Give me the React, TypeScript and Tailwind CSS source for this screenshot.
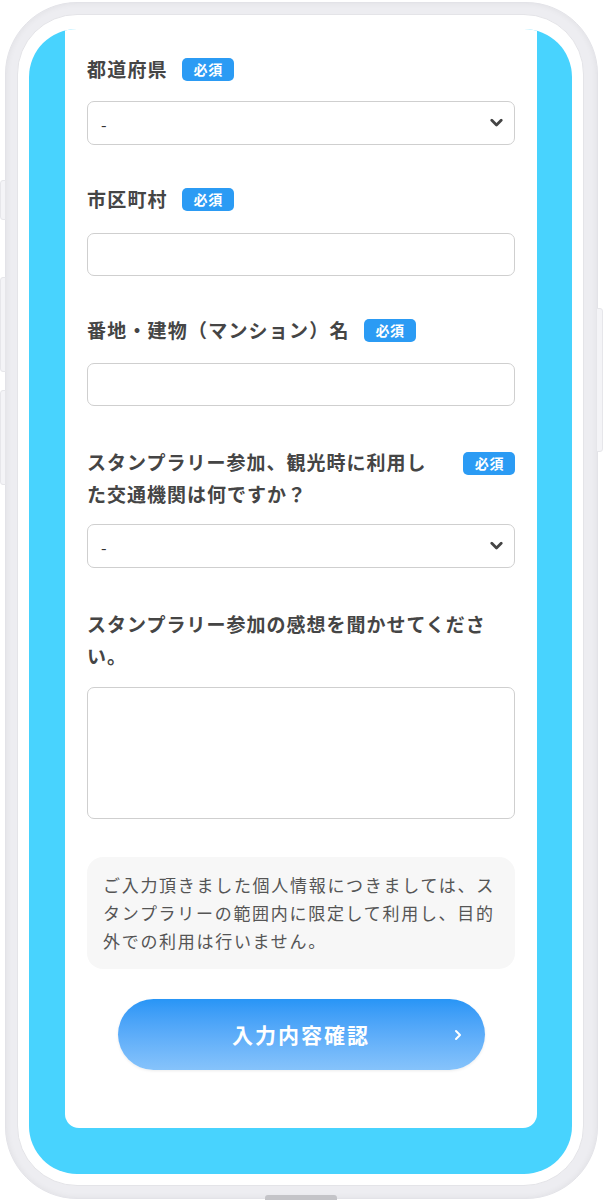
import React from "react";

const FONT = "font-['Noto_Sans_CJK_JP','Noto_Sans',sans-serif]";

function Badge() {
  return (
    <span className="inline-flex h-[23px] w-[52px] shrink-0 items-center justify-center rounded-[5px] bg-[#2b9bf4] pl-[1px] text-[14px] font-bold tracking-[0.05em] text-white">
      必須
    </span>
  );
}

function Chevron() {
  return (
    <svg
      className="pointer-events-none absolute right-[12px] top-1/2 -translate-y-1/2"
      width="13"
      height="9"
      viewBox="0 0 13 9"
      fill="none"
    >
      <polyline points="1.8,1.8 6.5,6.5 11.2,1.8" stroke="#444" strokeWidth="2.8" strokeLinecap="round" strokeLinejoin="round" />
    </svg>
  );
}

function SelectBox() {
  return (
    <div className="relative h-[44px]">
      <select
        className={`h-full w-full appearance-none rounded-[7px] border border-[#cfcfcf] bg-white pl-[13px] pt-[2px] text-[16px] text-[#333] outline-none ${FONT}`}
        defaultValue="-"
      >
        <option value="-">-</option>
      </select>
      <Chevron />
    </div>
  );
}

function Label({ text, badge = true }: { text: string; badge?: boolean }) {
  return (
    <div className="flex items-center gap-[14px]">
      <span className="text-[19px] font-bold leading-[32px] tracking-[1.2px] text-[#454545]">{text}</span>
      {badge && <Badge />}
    </div>
  );
}

export default function App() {
  return (
    <div className={`relative h-[1200px] w-[603px] overflow-hidden bg-white ${FONT}`}>
      {/* side buttons */}
      <div className="absolute left-0 top-[180px] h-[40px] w-[6px] rounded-l-[3px] border border-[#e6e6ea] bg-[#f4f4f7]" />
      <div className="absolute left-0 top-[277px] h-[95px] w-[6px] rounded-l-[3px] border border-[#e6e6ea] bg-[#f4f4f7]" />
      <div className="absolute left-0 top-[390px] h-[95px] w-[6px] rounded-l-[3px] border border-[#e6e6ea] bg-[#f4f4f7]" />
      <div className="absolute right-0 top-[308px] h-[144px] w-[7px] rounded-r-[3px] border border-[#e6e6ea] bg-[#f4f4f7]" />

      <div className="ml-[5px] mt-[2px] w-[593px] rounded-[72px] border border-[#e3e3e8] bg-[#ededf1] pb-[12px] pl-[11px] pr-[13px] pt-[11px] shadow-[inset_0_0_6px_rgba(0,0,0,0.06)]">
        <div className="rounded-[60px] border border-[#e4e4e8] bg-white pb-[11px] pl-[11px] pr-[11px] pt-[14px]">
          <div className="h-[1145px] overflow-hidden rounded-[48px] bg-[#48d3fe] pl-[36px] pr-[35px]">
            <div className="rounded-b-[14px] bg-white px-[22px] pb-[58px] pt-[24px]">
              {/* G1 */}
              <Label text="都道府県" />
              <div className="mt-[16px]">
                <SelectBox />
              </div>

              {/* G2 */}
              <div className="mt-[38px]">
                <Label text="市区町村" />
              </div>
              <input className="mt-[18px] block h-[43px] w-full rounded-[7px] border border-[#cfcfcf] bg-white outline-none" />

              {/* G3 */}
              <div className="mt-[38px]">
                <Label text="番地・建物（マンション）名" />
              </div>
              <input className="mt-[17px] block h-[43px] w-full rounded-[7px] border border-[#cfcfcf] bg-white outline-none" />

              {/* G4 */}
              <div className="mt-[40px] flex items-start justify-between">
                <span className="w-[352px] text-[19px] font-bold leading-[32px] tracking-[1px] text-[#454545]">
                  スタンプラリー参加、観光時に利用した交通機関は何ですか？
                </span>
                <div className="mt-[4px]">
                  <Badge />
                </div>
              </div>
              <div className="mt-[14px]">
                <SelectBox />
              </div>

              {/* G5 */}
              <div className="mt-[40px] text-[19px] font-bold leading-[32px] tracking-[1px] text-[#454545]">
                スタンプラリー参加の感想を聞かせてください。
              </div>
              <textarea className="mt-[15px] block h-[132px] w-full resize-none rounded-[7px] border border-[#cfcfcf] bg-white outline-none" />

              {/* notice */}
              <div className="mt-[38px] rounded-[16px] bg-[#f7f7f7] py-[14px] pl-[16px] pr-[14px] text-[17px] leading-[28px] tracking-[0.1em] text-[#555]">
                ご入力頂きました個人情報につきましては、スタンプラリーの範囲内に限定して利用し、目的外での利用は行いません。
              </div>

              {/* button */}
              <div className="mt-[30px] flex justify-center">
                <button className="relative flex h-[71px] w-[367px] items-center justify-center rounded-full bg-gradient-to-b from-[#2795f6] to-[#86c3fb] text-[21px] font-bold tracking-[2px] text-white shadow-[0_1px_3px_rgba(0,0,0,0.08)]">
                  入力内容確認
                  <svg className="absolute right-[23px] top-1/2 -translate-y-1/2" width="8" height="12" viewBox="0 0 8 12" fill="none">
                    <polyline points="2,2 6,6 2,10" stroke="white" strokeWidth="2" strokeLinecap="round" strokeLinejoin="round" />
                  </svg>
                </button>
              </div>
            </div>
          </div>
        </div>
      </div>

      {/* home indicator */}
      <div className="absolute left-[265px] top-[1195px] h-[6px] w-[72px] rounded-t-[3px] bg-[#c4c4c8]" />
    </div>
  );
}
